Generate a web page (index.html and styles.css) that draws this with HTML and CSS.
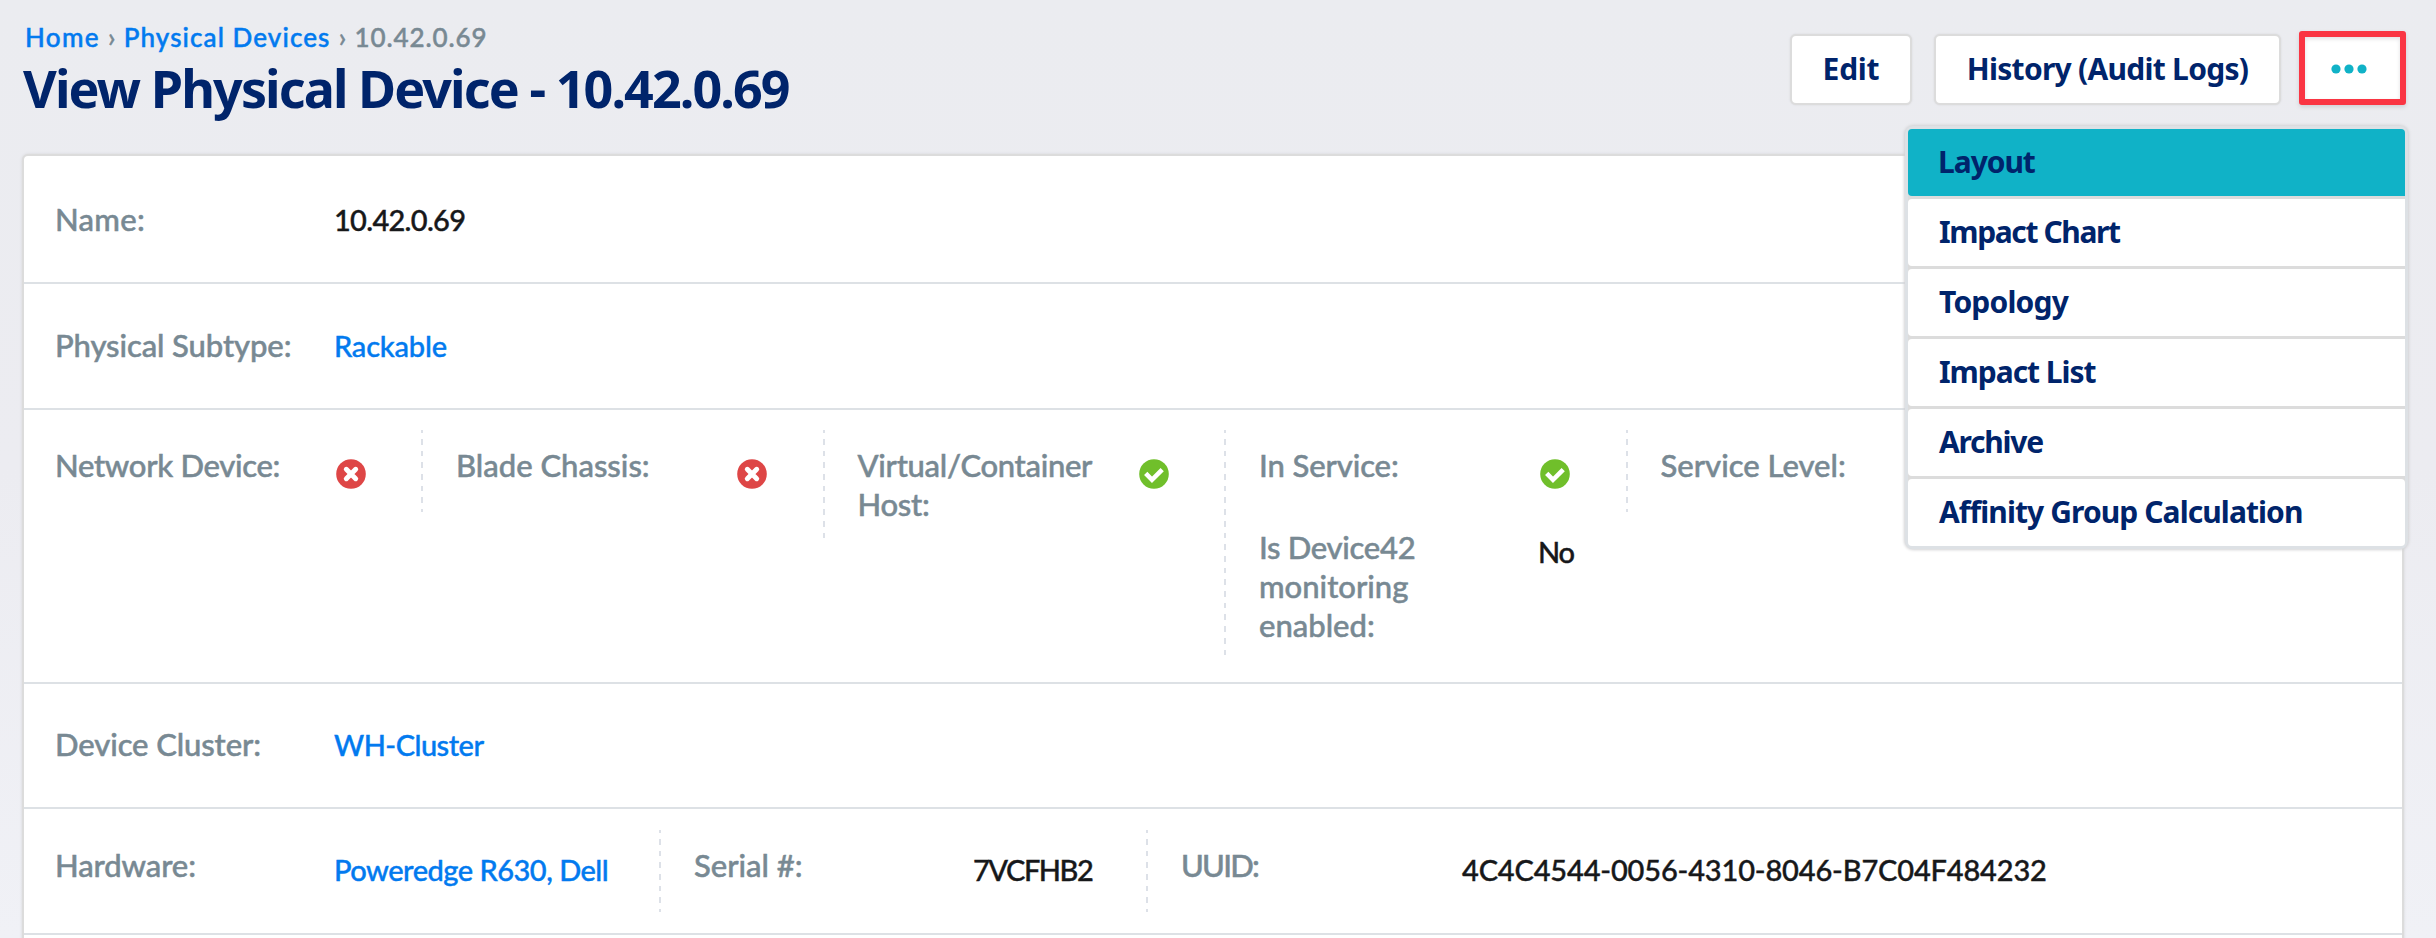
FILE: index.html
```html
<!DOCTYPE html>
<html lang="en">
<head>
<meta charset="utf-8">
<title>View Physical Device - 10.42.0.69</title>
<link rel="stylesheet" href="styles.css">
</head>
<body>
<svg class="sprite" width="0" height="0" aria-hidden="true">
  <symbol id="no" viewBox="0 0 30 30">
    <circle cx="15" cy="15" r="14.8" fill="#de4646"/>
    <path d="M10.3 10.3l9.4 9.4M19.7 10.3l-9.4 9.4" stroke="#fff" stroke-width="5" stroke-linecap="round"/>
  </symbol>
  <symbol id="yes" viewBox="0 0 30 30">
    <circle cx="15" cy="15" r="14.8" fill="#70bf2b"/>
    <path d="M6.7 14.4l6.3 6.4L23.2 10.7" fill="none" stroke="#fff" stroke-width="4.6"/>
  </symbol>
</svg>
<header class="header">
  <div class="heading">
    <nav class="crumbs"><a class="home">Home</a><i>›</i><a>Physical Devices</a><i>›</i><span>10.42.0.69</span></nav>
    <h1 class="title">View Physical Device - 10.42.0.69</h1>
  </div>
  <div class="actions">
    <button class="btn edit">Edit</button>
    <button class="btn history">History (Audit Logs)</button>
    <div class="more">
      <button class="more-btn" aria-label="More"><svg width="36" height="10" viewBox="0 0 36 10" fill="#10b2c7"><circle cx="5" cy="5" r="4.6"/><circle cx="18" cy="5" r="4.6"/><circle cx="31" cy="5" r="4.6"/></svg></button>
      <ul class="menu">
        <li class="active t10">Layout</li>
        <li class="t13">Impact Chart</li>
        <li class="t8">Topology</li>
        <li class="t10">Impact List</li>
        <li class="t12">Archive</li>
        <li class="t9">Affinity Group Calculation</li>
      </ul>
    </div>
  </div>
</header>
<main class="card">
  <section class="row single name-row">
    <div class="field"><div class="label name">Name:</div><div class="value t7">10.42.0.69</div></div>
  </section>
  <section class="row single sub-row">
    <div class="field"><div class="label t1">Physical Subtype:</div><div class="value link t2">Rackable</div></div>
  </section>
  <section class="row flags">
    <div class="cell"><div class="field"><div class="label t3">Network Device:</div><svg class="icon"><use href="#no"/></svg></div></div>
    <div class="cell divided"><div class="field"><div class="label">Blade Chassis:</div><svg class="icon"><use href="#no"/></svg></div></div>
    <div class="cell divided"><div class="field"><div class="label t3">Virtual/Container<br>Host:</div><svg class="icon"><use href="#yes"/></svg></div></div>
    <div class="cell divided">
      <div class="field"><div class="label t1">In Service:</div><svg class="icon"><use href="#yes"/></svg></div>
      <div class="field"><div class="label"><span class="t3">Is Device42</span><br>monitoring<br>enabled:</div><div class="value t12">No</div></div>
    </div>
    <div class="cell divided"><div class="field"><div class="label">Service Level:</div></div></div>
  </section>
  <section class="row single cluster-row">
    <div class="field"><div class="label t1">Device Cluster:</div><div class="value link t5">WH-Cluster</div></div>
  </section>
  <section class="row hardware">
    <div class="cell"><div class="field"><div class="label t1">Hardware:</div><div class="value link t5">Poweredge R630, Dell</div></div></div>
    <div class="cell divided"><div class="field"><div class="label">Serial #:</div><div class="value t14">7VCFHB2</div></div></div>
    <div class="cell divided"><div class="field"><div class="label t17">UUID:</div><div class="value uuid">4C4C4544-0056-4310-8046-B7C04F484232</div></div></div>
  </section>
</main>
</body>
</html>
```
FILE: styles.css
```css
* { box-sizing: border-box; }

body {
  margin: 0;
  height: 938px;
  overflow: hidden;
  display: flex;
  flex-direction: column;
  padding: 0 32px 0 22px;
  background: linear-gradient(#ebecf0, #ececf1 50%, #f0f1f6);
  font-family: Lato, sans-serif;
  font-weight: 500;
  color: #17181a;
}

.sprite { position: absolute; }

.header {
  flex: none;
  height: 154px;
  display: flex;
  justify-content: space-between;
}

.heading { padding-top: 21px; }

.crumbs {
  height: 32px;
  padding-left: 3px;
  display: flex;
  font-size: 26px;
  line-height: 32px;
  letter-spacing: 1.1px;
  color: #788993;
  -webkit-text-stroke: .5px;
}
.crumbs a { color: #027aef; }
.crumbs i { width: 24px; text-align: center; font-style: normal; letter-spacing: 0; }
.crumbs span { letter-spacing: .9px; }
.crumbs .home { letter-spacing: 1.3px; }

.title {
  margin: 3px 0 0 1px;
  font: 700 52px/64px "Noto Sans", sans-serif;
  letter-spacing: -1.91px;
  color: #00246b;
  white-space: nowrap;
}

.actions {
  display: flex;
  align-items: flex-start;
  margin-right: -2px;
  padding-top: 31px;
}

.btn {
  height: 71px;
  margin: 3px 22px 0 0;
  padding: 0 0 3px;
  border: 2px solid #dcdcdc;
  border-radius: 6px;
  box-shadow: 0 0 2px #d5d5d8;
  background: #fff;
  font: 700 30px "Noto Sans", sans-serif;
  color: #00246b;
}
.edit { width: 122px; letter-spacing: -.24px; }
.history { width: 347px; margin-right: 18px; letter-spacing: -.73px; }

.more { position: relative; }
.more-btn {
  display: flex;
  align-items: center;
  justify-content: center;
  width: 107px;
  height: 74px;
  padding: 2px 7px 0 0;
  border: 6px solid #fa3543;
  border-radius: 3px;
  background: #fff;
  box-shadow: 0 2px 4px #cfcfd4, inset 0 2px 4px #e2e2e4;
}

.menu {
  position: absolute;
  z-index: 1;
  top: 95px;
  right: -2px;
  width: 503px;
  margin: 0;
  padding: 0;
  list-style: none;
  border: 3px solid #dde1e5;
  border-radius: 8px;
  box-shadow: 0 0 3px 1px #d2d2d4;
  background: #dcdcdc;
  font: 700 30px/65px "Noto Sans", sans-serif;
  color: #00246b;
}
.menu li {
  height: 67px;
  margin-bottom: 3px;
  padding: 0 0 2px 31px;
  border-radius: 4px 0 0 4px;
  background: #fff;
}
.menu .active { border-radius: 4px 4px 0 4px; padding-left: 30px; background: #10b2c7; }
.menu li:last-child { margin-bottom: 0; border-radius: 4px; }

.card {
  flex: none;
  width: 2382px;
  border: 2px solid #dcdcdc;
  border-radius: 6px;
  box-shadow: 0 0 3px #d5d5d8;
  background: #fff;
  height: 800px;
}

.row {
  display: flex;
  padding-left: 31px;
  border-bottom: 2px solid #dde1e5;
}
.single { align-items: center; }
.name-row { height: 128px; }
.sub-row { height: 126px; padding-bottom: 1px; }
.cluster-row { height: 125px; padding-bottom: 3px; }

.flags {
  display: grid;
  grid-template-columns: 366px 401.5px 401.5px 401.5px 401.5px;
  align-items: start;
  height: 274px;
  padding-top: 20px;
}
.hardware {
  display: grid;
  grid-template-columns: 604px 487px 900px;
  align-items: start;
  height: 126px;
  padding-top: 21px;
}

.divided {
  padding-left: 35px;
  background: repeating-linear-gradient(#dde1e8 0 3px, transparent 3px 9px, #dde1e8 9px 11.7px) left top / 2px 100% no-repeat;
}

.field { display: flex; align-items: flex-start; }
.cell .field { min-height: 82px; padding: 15.5px 0; }
.cell .value { margin-top: 4.5px; }

.label {
  flex: none;
  width: 279px;
  font-size: 31px;
  line-height: 39px;
  color: #788993;
  -webkit-text-stroke: .5px;
}
.name { letter-spacing: .3px; }
.value {
  font-size: 29px;
  line-height: 39px;
  white-space: nowrap;
  -webkit-text-stroke: .4px;
}
.link { color: #027aef; }
.icon { width: 30px; height: 30px; margin: 13.5px 0 0 2px; }
.uuid { padding-left: 2px; letter-spacing: -.16px; }

/* Tracking steps */
.t1 { letter-spacing: -.1px; }
.t2 { letter-spacing: -.2px; }
.t3 { letter-spacing: -.3px; }
.t5 { letter-spacing: -.5px; }
.t7 { letter-spacing: -.7px; }
.t8 { letter-spacing: -.8px; }
.t9 { letter-spacing: -.91px; }
.t10 { letter-spacing: -1.05px; }
.t12 { letter-spacing: -1.25px; }
.t13 { letter-spacing: -1.39px; }
.t14 { letter-spacing: -1.46px; }
.t17 { letter-spacing: -1.78px; }
```
